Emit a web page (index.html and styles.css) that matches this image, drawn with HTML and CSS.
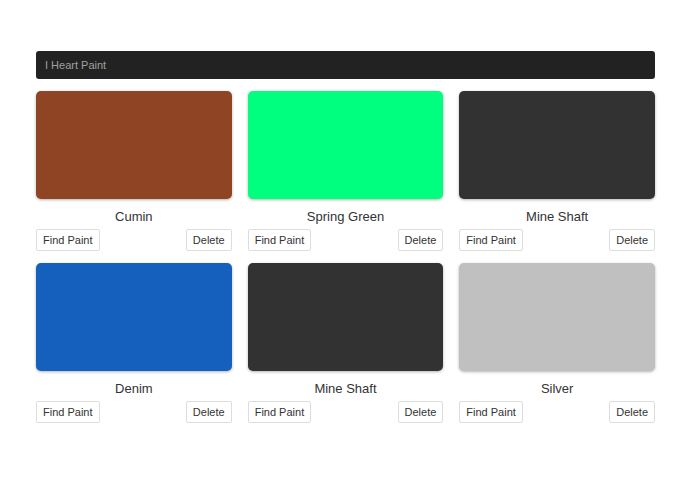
FILE: index.html
```html
<!DOCTYPE html>
<html lang="en">
<head>
    <meta charset="UTF-8">
    <meta name="viewport" content="width=device-width, initial-scale=1.0">
    <title>I Heart Paint</title>
    <link rel="stylesheet" href="styles.css">
</head>
<body>
    <div class="container">
        <nav class="navbar">
            <span class="brand">I Heart Paint</span>
        </nav>

        <section class="paints">
            <div class="paint">
                <div class="swatch" style="background-color: #8f4523;"></div>
                <p class="paint-name">Cumin</p>
                <div class="actions">
                    <button type="button">Find Paint</button>
                    <button type="button">Delete</button>
                </div>
            </div>
            <div class="paint">
                <div class="swatch" style="background-color: #00ff7f;"></div>
                <p class="paint-name">Spring Green</p>
                <div class="actions">
                    <button type="button">Find Paint</button>
                    <button type="button">Delete</button>
                </div>
            </div>
            <div class="paint">
                <div class="swatch" style="background-color: #323232;"></div>
                <p class="paint-name">Mine Shaft</p>
                <div class="actions">
                    <button type="button">Find Paint</button>
                    <button type="button">Delete</button>
                </div>
            </div>
            <div class="paint">
                <div class="swatch" style="background-color: #1560bd;"></div>
                <p class="paint-name">Denim</p>
                <div class="actions">
                    <button type="button">Find Paint</button>
                    <button type="button">Delete</button>
                </div>
            </div>
            <div class="paint">
                <div class="swatch" style="background-color: #323232;"></div>
                <p class="paint-name">Mine Shaft</p>
                <div class="actions">
                    <button type="button">Find Paint</button>
                    <button type="button">Delete</button>
                </div>
            </div>
            <div class="paint">
                <div class="swatch" style="background-color: #c0c0c0;"></div>
                <p class="paint-name">Silver</p>
                <div class="actions">
                    <button type="button">Find Paint</button>
                    <button type="button">Delete</button>
                </div>
            </div>
        </section>
    </div>
</body>
</html>
```

FILE: styles.css
```css
* {
    margin: 0;
    padding: 0;
    box-sizing: border-box;
}

body {
    font-family: "Liberation Sans", Arial, sans-serif;
    background-color: #fff;
    color: #333;
}

.container {
    width: 619px;
    margin-left: 36px;
    padding-top: 51px;
}

.navbar {
    height: 28px;
    background-color: #222;
    border-radius: 3px;
    padding-left: 9px;
    display: flex;
    align-items: center;
}

.brand {
    font-size: 11px;
    color: #a0a0a0;
}

.paints {
    display: grid;
    grid-template-columns: repeat(3, 1fr);
    column-gap: 16px;
    row-gap: 12px;
    margin-top: 12px;
}

.swatch {
    height: 108px;
    border-radius: 5px;
    box-shadow: 0 1px 3px rgba(0, 0, 0, 0.3);
}

.paint-name {
    margin-top: 8px;
    font-size: 13px;
    line-height: 20px;
    text-align: center;
}

.actions {
    margin-top: 2px;
    display: flex;
    justify-content: space-between;
}

.actions button {
    height: 22px;
    padding: 0 6px;
    font-family: inherit;
    font-size: 11px;
    color: #333;
    background-color: #fff;
    border: 1px solid #ddd;
    border-radius: 2px;
    cursor: pointer;
}
```
